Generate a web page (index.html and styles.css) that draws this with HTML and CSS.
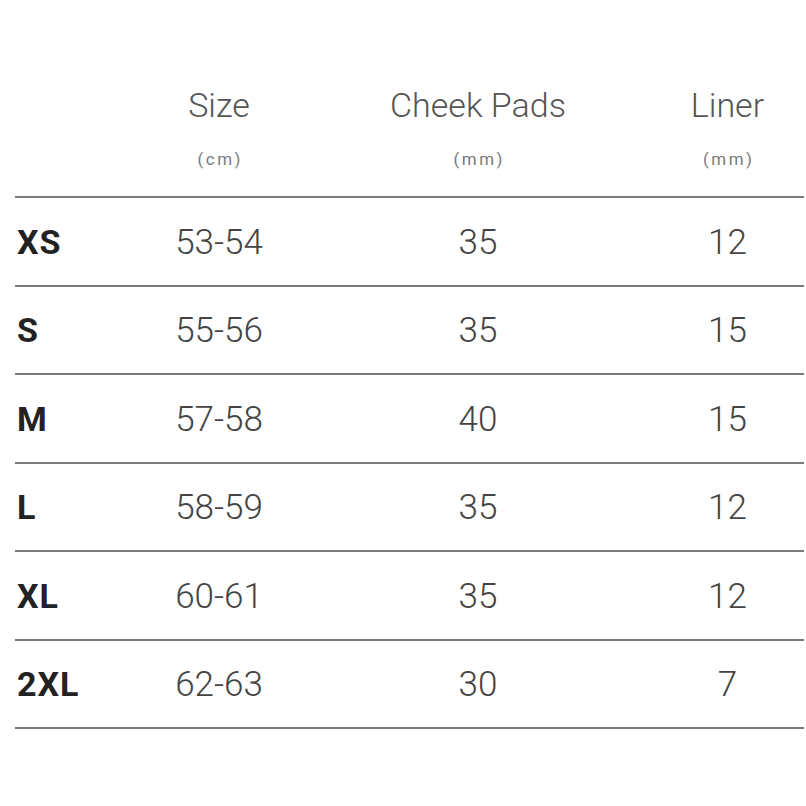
FILE: index.html
```html
<!DOCTYPE html>
<html lang="en">
<head>
<meta charset="utf-8">
<title>Size chart</title>
<link rel="stylesheet" href="styles.css">
</head>
<body>
<div class="chart">
  <div class="row head">
    <div class="cell label"></div>
    <div class="cell"><span class="title">Size</span><span class="unit">(cm)</span></div>
    <div class="cell"><span class="title">Cheek Pads</span><span class="unit">(mm)</span></div>
    <div class="cell last"><span class="title">Liner</span><span class="unit">(mm)</span></div>
  </div>
  <div class="row body">
    <div class="cell label">XS</div><div class="cell">53-54</div><div class="cell">35</div><div class="cell last">12</div>
  </div>
  <div class="row body">
    <div class="cell label">S</div><div class="cell">55-56</div><div class="cell">35</div><div class="cell last">15</div>
  </div>
  <div class="row body">
    <div class="cell label">M</div><div class="cell">57-58</div><div class="cell">40</div><div class="cell last">15</div>
  </div>
  <div class="row body">
    <div class="cell label">L</div><div class="cell">58-59</div><div class="cell">35</div><div class="cell last">12</div>
  </div>
  <div class="row body">
    <div class="cell label">XL</div><div class="cell">60-61</div><div class="cell">35</div><div class="cell last">12</div>
  </div>
  <div class="row body end">
    <div class="cell label">2XL</div><div class="cell">62-63</div><div class="cell">30</div><div class="cell last">7</div>
  </div>
</div>
</body>
</html>
```
FILE: styles.css
```css
html, body {
  margin: 0;
  padding: 0;
  background: #ffffff;
  overflow: hidden;
}

body {
  font-family: Roboto, "Liberation Sans", sans-serif;
}

.chart {
  margin-left: 15px;
  width: 789px;
  padding-top: 85px;
}

.row {
  display: grid;
  grid-template-columns: 104px 200px 318px 167px;
}

.cell {
  text-align: center;
}

.cell.last {
  padding-left: 14px;
}

.head .cell {
  display: flex;
  flex-direction: column;
  align-items: center;
  padding-bottom: 27px;
}

.title {
  font-size: 34px;
  line-height: 40px;
  font-weight: 300;
  color: #555;
}

.unit {
  margin-top: 24px;
  padding-left: 2.5px;
  font-size: 17px;
  line-height: 20px;
  letter-spacing: 2.5px;
  font-weight: 400;
  color: #7a7a7a;
}

.body {
  border-top: 2px solid #7a7a7a;
  height: 86.5px;
  align-items: center;
}

.body.end {
  border-bottom: 2px solid #7a7a7a;
}

.body .cell {
  font-size: 35px;
  line-height: 41px;
  font-weight: 300;
  color: #444;
  padding-top: 2px;
}

.body .cell.label {
  text-align: left;
  padding-left: 2px;
  font-size: 34px;
  letter-spacing: 1px;
  font-weight: 700;
  color: #222;
}
```
